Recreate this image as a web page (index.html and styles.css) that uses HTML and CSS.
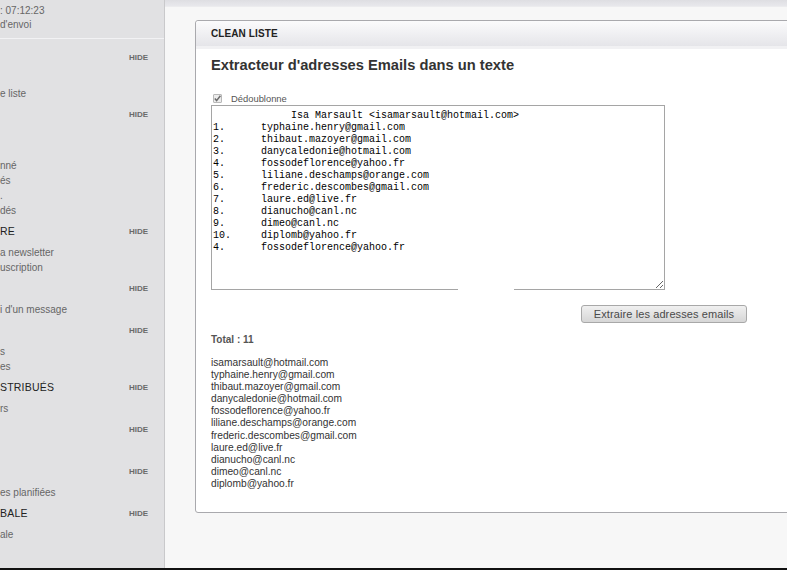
FILE: index.html
```html
<!DOCTYPE html>
<html lang="fr">
<head>
<meta charset="utf-8">
<title>Clean liste</title>
<link rel="stylesheet" href="styles.css">
</head>
<body>
<div class="page">
  <aside class="sidebar">
    <div class="top-group">
      <div class="top-item">: 07:12:23</div>
      <div class="top-item">d'envoi</div>
    </div>
    <div class="group">
      <div class="head"><span class="label"></span><span class="hide">HIDE</span></div>
      <div class="item"></div>
      <div class="item">e liste</div>
    </div>
    <div class="group">
      <div class="head"><span class="label"></span><span class="hide">HIDE</span></div>
      <div class="item"></div>
      <div class="item"></div>
      <div class="item">nné</div>
      <div class="item">és</div>
      <div class="item">.</div>
      <div class="item">dés</div>
    </div>
    <div class="group">
      <div class="head"><span class="label">RE</span><span class="hide">HIDE</span></div>
      <div class="item">a newsletter</div>
      <div class="item">uscription</div>
    </div>
    <div class="group">
      <div class="head"><span class="label"></span><span class="hide">HIDE</span></div>
      <div class="item">i d'un message</div>
    </div>
    <div class="group">
      <div class="head"><span class="label"></span><span class="hide">HIDE</span></div>
      <div class="item">s</div>
      <div class="item">es</div>
    </div>
    <div class="group">
      <div class="head"><span class="label">STRIBUÉS</span><span class="hide">HIDE</span></div>
      <div class="item">rs</div>
    </div>
    <div class="group">
      <div class="head"><span class="label"></span><span class="hide">HIDE</span></div>
      <div class="item"></div>
    </div>
    <div class="group">
      <div class="head"><span class="label"></span><span class="hide">HIDE</span></div>
      <div class="item">es planifiées</div>
    </div>
    <div class="group">
      <div class="head"><span class="label">BALE</span><span class="hide">HIDE</span></div>
      <div class="item">ale</div>
      <div class="item"></div>
    </div>
    <div class="group">
      <div class="head"><span class="label"></span><span class="hide">HIDE</span></div>
    </div>
  </aside>
  <main class="main">
    <div class="topstrip"></div>
    <section class="panel">
      <header class="panel-head">CLEAN LISTE</header>
      <div class="panel-body">
        <h1 class="title">Extracteur d'adresses Emails dans un texte</h1>
        <label class="check-row">
          <span class="checkbox">
            <svg width="9" height="9" viewBox="0 0 9 9"><path d="M1.8 4.6 L3.6 6.6 L7.4 1.8" fill="none" stroke="#6a6a6a" stroke-width="1.5"/></svg>
          </span>
          <span class="check-label">Dédoublonne</span>
        </label>
        <div class="area-wrap">
<textarea class="area" spellcheck="false">             Isa Marsault &lt;isamarsault@hotmail.com&gt;
1.	typhaine.henry@gmail.com
2.	thibaut.mazoyer@gmail.com
3.	danycaledonie@hotmail.com
4.	fossodeflorence@yahoo.fr
5.	liliane.deschamps@orange.com
6.	frederic.descombes@gmail.com
7.	laure.ed@live.fr
8.	dianucho@canl.nc
9.	dimeo@canl.nc
10.	diplomb@yahoo.fr
4.	fossodeflorence@yahoo.fr</textarea>
          <span class="border-gap"></span>
        </div>
        <div class="btn-row">
          <button class="btn" type="button">Extraire les adresses emails</button>
        </div>
        <p class="total">Total : 11</p>
        <ul class="results">
          <li>isamarsault@hotmail.com</li>
          <li>typhaine.henry@gmail.com</li>
          <li>thibaut.mazoyer@gmail.com</li>
          <li>danycaledonie@hotmail.com</li>
          <li>fossodeflorence@yahoo.fr</li>
          <li>liliane.deschamps@orange.com</li>
          <li>frederic.descombes@gmail.com</li>
          <li>laure.ed@live.fr</li>
          <li>dianucho@canl.nc</li>
          <li>dimeo@canl.nc</li>
          <li>diplomb@yahoo.fr</li>
        </ul>
      </div>
    </section>
  </main>
</div>
<div class="bottom-bar"></div>
</body>
</html>
```

FILE: styles.css
```css
html, body {
  margin: 0;
  padding: 0;
}
body {
  width: 787px;
  height: 570px;
  overflow: hidden;
  font-family: "Liberation Sans", Arial, sans-serif;
  background: #f7f7f7;
  display: flex;
  flex-direction: column;
}
.page {
  display: flex;
  height: 568px;
  overflow: hidden;
}
.bottom-bar {
  height: 2px;
  background: #111;
}

/* Sidebar */
.sidebar {
  width: 164px;
  flex: none;
  background: #e1e1e3;
  border-right: 1px solid #c9c9cb;
  overflow: hidden;
}
.top-group {
  padding-top: 4px;
  height: 34px;
  border-bottom: 1px solid #f2f2f4;
}
.top-item {
  height: 14px;
  line-height: 14px;
  font-size: 10px;
  color: #666;
  white-space: nowrap;
}
.top-group + .group {
  margin-top: 11px;
}
.group {
  padding-bottom: 6px;
}
.head {
  display: flex;
  justify-content: space-between;
  align-items: center;
  height: 14px;
  margin-bottom: 7px;
  padding-right: 16px;
}
.label {
  font-size: 10.5px;
  color: #222;
  letter-spacing: 0.2px;
  white-space: nowrap;
}
.hide {
  font-size: 8px;
  font-weight: bold;
  color: #6a6a6a;
}
.item {
  height: 15px;
  line-height: 15px;
  font-size: 10px;
  color: #666;
  white-space: nowrap;
}

/* Main */
.main {
  flex: 1;
  min-width: 0;
  overflow: hidden;
  background: #f7f7f7;
}
.topstrip {
  height: 6px;
  background: linear-gradient(#dedee2, #e8e8ec);
  border-bottom: 1px solid #ececee;
}
.panel {
  margin-top: 13px;
  margin-left: 30px;
  width: 640px;
  background: #fff;
  border: 1px solid #a9a9ad;
  border-radius: 3px;
}
.panel-head {
  height: 25px;
  line-height: 25px;
  padding-left: 15px;
  font-size: 10px;
  font-weight: bold;
  color: #222;
  letter-spacing: 0.1px;
  background: linear-gradient(#fbfbfc, #e5e5e9);
  border-bottom: 3px solid #f1f1f3;
  border-radius: 3px 3px 0 0;
}
.panel-body {
  padding: 0 15px 22px;
}
.title {
  margin: 7px 0 0;
  font-size: 14.7px;
  line-height: 18px;
  font-weight: bold;
  color: #333;
}
.check-row {
  display: flex;
  align-items: center;
  margin-top: 18px;
  height: 13px;
}
.checkbox {
  display: flex;
  align-items: center;
  justify-content: center;
  width: 7px;
  height: 7px;
  margin-left: 2px;
  border: 1px solid #b8b8b8;
  background: #ececec;
  border-radius: 1px;
}
.checkbox svg {
  flex: none;
}
.check-label {
  margin-left: 9px;
  font-size: 9.4px;
  color: #555;
}
.area-wrap {
  position: relative;
  width: 454px;
  height: 185px;
}
.area {
  display: block;
  box-sizing: border-box;
  width: 454px;
  height: 185px;
  margin: 0;
  padding: 4px 1px 2px;
  border: 1px solid #a5a5a5;
  font-family: "Liberation Mono", "Courier New", monospace;
  font-size: 10px;
  line-height: 12px;
  color: #000;
  tab-size: 8;
  -moz-tab-size: 8;
  resize: both;
  overflow: hidden;
  outline: none;
  background: #fff;
}
.border-gap {
  position: absolute;
  left: 247px;
  top: 183px;
  width: 56px;
  height: 3px;
  background: #fff;
}
.btn-row {
  display: flex;
  margin-top: 15px;
  padding-left: 370px;
}
.btn {
  width: 166px;
  height: 18px;
  padding: 0;
  font-family: "Liberation Sans", Arial, sans-serif;
  font-size: 11px;
  color: #4a4a4a;
  letter-spacing: 0.1px;
  background: linear-gradient(#f0f0f0, #d6d6d6);
  border: 1px solid #a8a8a8;
  border-radius: 3px;
}
.total {
  margin: 11px 0 0;
  font-size: 10px;
  line-height: 12px;
  font-weight: bold;
  color: #555;
}
.results {
  list-style: none;
  margin: 11px 0 0;
  padding: 0;
}
.results li {
  font-size: 10.2px;
  line-height: 12.1px;
  color: #333;
}
```
